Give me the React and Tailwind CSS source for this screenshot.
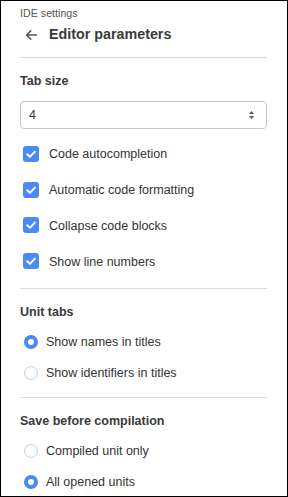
import React from "react";

function Checkbox() {
  return (
    <span className="w-[16px] h-[16px] rounded-[3px] bg-[#4a8af4] flex items-center justify-center shrink-0">
      <svg width="12" height="12" viewBox="0 0 12 12">
        <path d="M2.2 6.2 L4.9 8.8 L9.9 3.6" fill="none" stroke="#ffffff" strokeWidth="1.9" strokeLinecap="round" strokeLinejoin="round" />
      </svg>
    </span>
  );
}

function Radio({ checked }) {
  return checked ? (
    <span className="w-[14px] h-[14px] rounded-full bg-[#4a8af4] flex items-center justify-center shrink-0">
      <span className="w-[6px] h-[6px] rounded-full bg-white" />
    </span>
  ) : (
    <span className="w-[14px] h-[14px] rounded-full border border-[#cfcfcf] bg-white shrink-0" />
  );
}

const Divider = ({ className = "" }) => <div className={"h-px bg-[#dcdcdc] " + className} />;

export default function App() {
  const checks = ["Code autocompletion", "Automatic code formatting", "Collapse code blocks", "Show line numbers"];
  return (
    <div
      className="w-[288px] h-[497px] border border-black bg-white text-[#333333] pl-[19px] pr-[20px] overflow-hidden"
      style={{ fontFamily: '"Liberation Sans", Arial, sans-serif' }}
    >
      <div className="h-[24px] leading-[24px] text-[10.7px] text-[#555555]">IDE settings</div>
      <div className="h-[18px] mt-[1px] flex items-center">
        <svg width="13" height="12" viewBox="0 0 13 12" className="ml-[5px]">
          <path d="M12 6 H1.8 M6.2 1.4 L1.6 6 L6.2 10.6" fill="none" stroke="#555555" strokeWidth="1.5" />
        </svg>
        <span className="ml-[11px] text-[14.3px] font-bold text-[#3a3a3a]">Editor parameters</span>
      </div>
      <Divider className="mt-[13px]" />
      <div className="h-[43px] pt-[4px] flex items-center text-[12.5px] font-bold text-[#3a3a3a]">Tab size</div>
      <div className="h-[28px] rounded-[4px] border border-[#c8c8c8] flex items-center justify-between pl-[8px] pr-[11px] text-[12.5px]">
        <span className="pt-[1px]">4</span>
        <svg width="7" height="10" viewBox="0 0 7 10">
          <path d="M3.5 1 L6 4 H1 Z" fill="#555555" />
          <path d="M3.5 9 L6 6 H1 Z" fill="#555555" />
        </svg>
      </div>
      <div className="mt-[7px]">
        {checks.map((c) => (
          <div key={c} className="h-[35.7px] flex items-center pl-[3px]">
            <Checkbox />
            <span className="ml-[10px] pt-[2px] text-[12.5px]">{c}</span>
          </div>
        ))}
      </div>
      <Divider className="mt-[9px]" />
      <div className="h-[44px] pt-[4px] flex items-center text-[12.5px] font-bold text-[#3a3a3a]">Unit tabs</div>
      <div className="flex flex-col gap-[15px] mt-[1px]">
        <div className="h-[16px] flex items-center pl-[4px]">
          <Radio checked />
          <span className="ml-[8px] pt-[1px] text-[12.5px]">Show names in titles</span>
        </div>
        <div className="h-[16px] flex items-center pl-[4px]">
          <Radio />
          <span className="ml-[8px] pt-[1px] text-[12.5px]">Show identifiers in titles</span>
        </div>
      </div>
      <Divider className="mt-[16px]" />
      <div className="h-[44px] pt-[4px] flex items-center text-[12.5px] font-bold text-[#3a3a3a]">Save before compilation</div>
      <div className="flex flex-col gap-[15.5px] mt-[1px]">
        <div className="h-[16px] flex items-center pl-[4px]">
          <Radio />
          <span className="ml-[8px] pt-[1px] text-[12.5px]">Compiled unit only</span>
        </div>
        <div className="h-[16px] flex items-center pl-[4px]">
          <Radio checked />
          <span className="ml-[8px] pt-[1px] text-[12.5px]">All opened units</span>
        </div>
      </div>
    </div>
  );
}
